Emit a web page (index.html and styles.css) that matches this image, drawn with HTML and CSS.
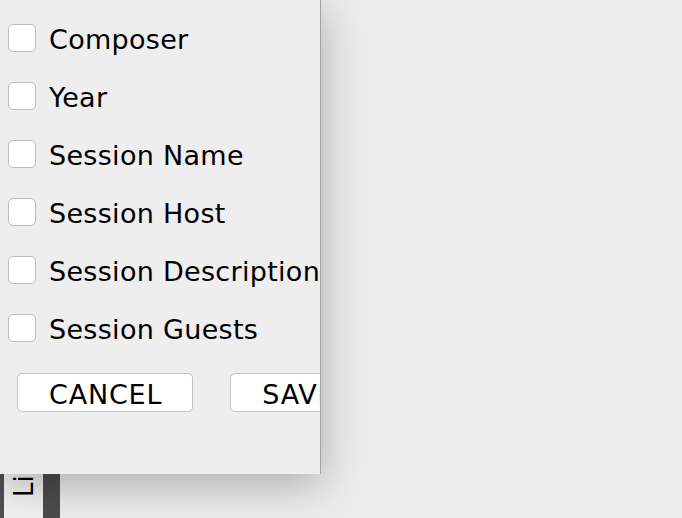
FILE: index.html
```html
<!DOCTYPE html>
<html>
<head>
<meta charset="utf-8">
<link rel="stylesheet" href="styles.css">
</head>
<body>
<div class="dialog">
  <div class="options">
    <label class="option"><span class="box"></span><span class="text">Composer</span></label>
    <label class="option"><span class="box"></span><span class="text">Year</span></label>
    <label class="option"><span class="box"></span><span class="text">Session Name</span></label>
    <label class="option"><span class="box"></span><span class="text">Session Host</span></label>
    <label class="option"><span class="box"></span><span class="text">Session Description</span></label>
    <label class="option"><span class="box"></span><span class="text">Session Guests</span></label>
  </div>
  <div class="actions">
    <button class="btn">CANCEL</button>
    <button class="btn">SAVE</button>
  </div>
</div>
<div class="strip">
  <div class="edge"></div>
  <div class="tab"><span class="tab-text">Library</span></div>
  <div class="edge wide"></div>
</div>
</body>
</html>
```
FILE: styles.css
```css
html, body {
  margin: 0;
  padding: 0;
  width: 682px;
  height: 518px;
  overflow: hidden;
  background: #ececec;
  font-family: "DejaVu Sans", Verdana, sans-serif;
}

.dialog {
  position: relative;
  z-index: 1;
  box-sizing: border-box;
  width: 321px;
  height: 474px;
  background: #eeeeee;
  border-right: 1px solid #a3a3a3;
  box-shadow: 0 10px 40px rgba(0, 0, 0, 0.28);
  overflow: hidden;
  padding: 24px 0 0 8px;
}

.options {
  display: flex;
  flex-direction: column;
  gap: 30px;
}

.option {
  display: flex;
  align-items: flex-start;
  gap: 13px;
  height: 28px;
  white-space: nowrap;
}

.box {
  flex: none;
  box-sizing: border-box;
  width: 28px;
  height: 28px;
  border: 1px solid #b9b9b9;
  border-radius: 5px;
  background: #ffffff;
}

.text {
  font-size: 27px;
  letter-spacing: 0.3px;
  line-height: 28px;
  padding-top: 2px;
  color: #000000;
}

.actions {
  display: flex;
  gap: 37px;
  margin: 31px 0 0 9px;
}

.btn {
  flex: none;
  box-sizing: border-box;
  height: 39px;
  padding: 4px 30px 0 31px;
  margin: 0;
  font-family: inherit;
  font-size: 27px;
  letter-spacing: 0.8px;
  line-height: 34px;
  color: #000000;
  background: #ffffff;
  border: 1px solid #c2c2c2;
  border-radius: 5px;
  white-space: nowrap;
}

.strip {
  display: flex;
  height: 44px;
}

.edge {
  width: 4px;
  background: #505053;
}

.edge.wide {
  width: 17px;
  background: #4c4c4f;
}

.tab {
  width: 39px;
  background: #f1f1f1;
  overflow: hidden;
  display: flex;
  justify-content: center;
  align-items: flex-end;
}

.tab-text {
  writing-mode: vertical-rl;
  transform: rotate(180deg);
  font-size: 26px;
  line-height: 26px;
  color: #000000;
  padding-top: 21px;
}
```
